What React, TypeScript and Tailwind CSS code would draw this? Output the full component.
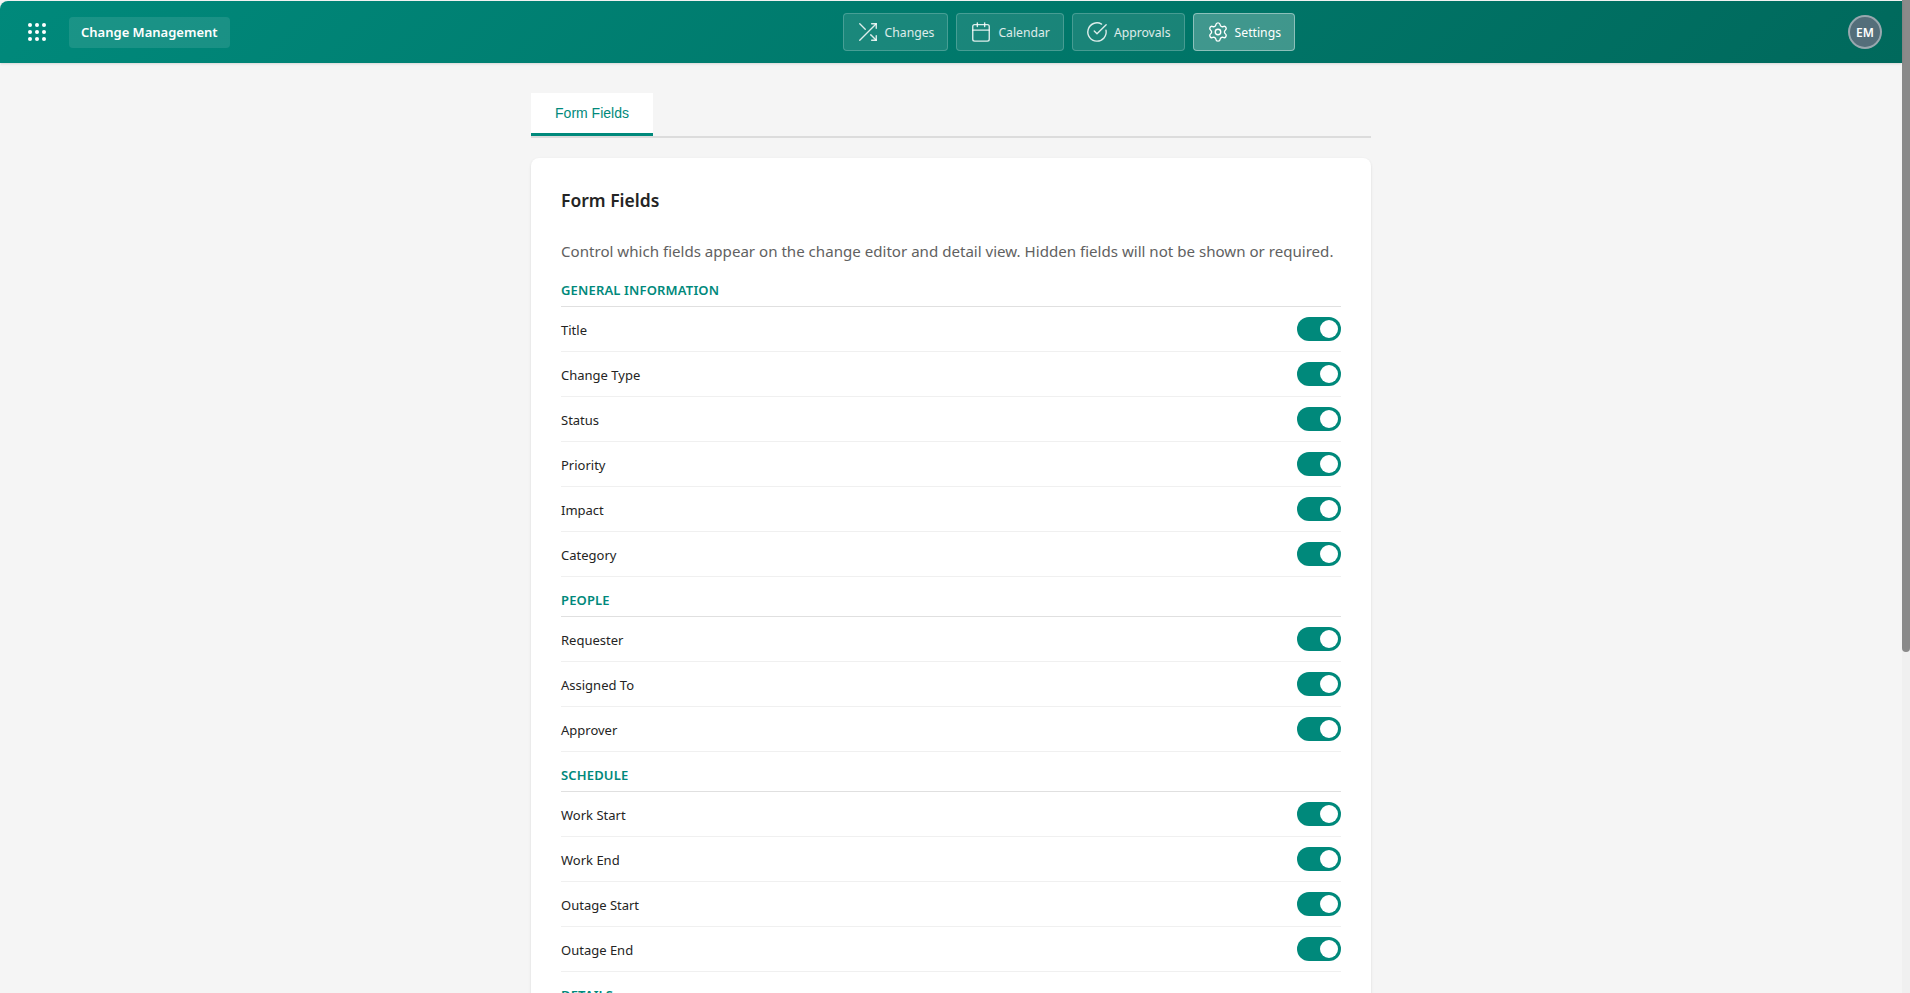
import { Calendar, CircleCheckBig, Settings } from "lucide-react";

const sections = [
  { name: "General Information", fields: ["Title", "Change Type", "Status", "Priority", "Impact", "Category"] },
  { name: "People", fields: ["Requester", "Assigned To", "Approver"] },
  { name: "Schedule", fields: ["Work Start", "Work End", "Outage Start", "Outage End"] },
  { name: "Details", fields: ["Description"] },
];

// straight crossing arrows, lucide's shuffle is curved
function ChangesIcon({ size, strokeWidth }: { size: number; strokeWidth: number }) {
  return (
    <svg width={size} height={size} viewBox="0 0 24 24" fill="none" stroke="currentColor" strokeWidth={strokeWidth} strokeLinecap="round" strokeLinejoin="round">
      <polyline points="16 3 21 3 21 8" />
      <line x1="3" y1="21" x2="21" y2="3" />
      <polyline points="21 16 21 21 16 21" />
      <line x1="15" y1="15" x2="21" y2="21" />
      <line x1="3" y1="3" x2="9" y2="9" />
    </svg>
  );
}

const nav = [
  { label: "Changes", icon: ChangesIcon, size: 22 },
  { label: "Calendar", icon: Calendar, size: 22 },
  { label: "Approvals", icon: CircleCheckBig, size: 22 },
  { label: "Settings", icon: Settings, size: 22, active: true },
];

function Toggle() {
  return (
    <div className="w-11 h-6 rounded-full bg-[#00897b] flex items-center justify-end pr-[3px]">
      <div className="w-[18px] h-[18px] rounded-full bg-white" />
    </div>
  );
}

function Dots() {
  return (
    <svg width="18" height="18" viewBox="0 0 18 18" fill="#fff">
      {[2, 9, 16].map((y) =>
        [2, 9, 16].map((x) => <circle key={`${x}-${y}`} cx={x} cy={y} r="2" />)
      )}
    </svg>
  );
}

export default function App() {
  return (
    <div className="h-[993px] w-full overflow-hidden flex bg-[#f5f5f5] font-['Noto_Sans','Open_Sans',sans-serif]">
      <div className="flex-1 min-w-0 flex flex-col pt-px">
        {/* HEADER */}
        <header className="relative h-[62px] shrink-0 rounded-tl-lg pl-7 pr-5 flex items-center bg-[linear-gradient(135deg,#00897b,#00695c)] text-white shadow-sm">
          <div className="flex items-center gap-[23px]">
            <Dots />
            <div className="h-[31px] px-3 rounded bg-white/10 flex items-center text-[13px] font-semibold">
              <span className="pt-px">Change Management</span>
            </div>
          </div>

          <nav className="ml-[613px] flex items-center gap-2">
            {nav.map((n) => (
              <button
                key={n.label}
                className={
                  n.active
                    ? "h-[38px] px-[13px] flex items-center gap-1.5 rounded border border-white/40 bg-white/25 text-[12.2px]"
                    : "h-[38px] px-[13px] flex items-center gap-1.5 rounded border border-white/20 bg-white/10 text-[12.2px] text-white/85"
                }
              >
                <n.icon size={n.size} strokeWidth={1.5} />
                <span className="pt-0.5">{n.label}</span>
              </button>
            ))}
          </nav>

          <div className="ml-auto w-[34px] h-[34px] rounded-full border-2 border-white/40 bg-[#546e7a] flex items-center justify-center text-xs font-semibold">
            <span className="pt-0.5">EM</span>
          </div>
        </header>

        {/* CONTENT */}
        <main className="w-[840px] mx-auto pt-[30px]">
          <div className="border-b-2 border-[#dcdcdc] h-[45px]">
            <div className="w-[122px] h-[43px] bg-white border-b-[3px] border-[#00897b] flex items-center justify-center text-sm text-[#00897b] font-['Liberation_Sans',sans-serif]">
              Form Fields
            </div>
          </div>

          <div className="mt-5 bg-white rounded-lg shadow-sm px-[30px] pt-[29px]">
            <h2 className="text-[17.5px] font-semibold text-[#242424]">Form Fields</h2>
            <p className="mt-[27px] mb-[18px] text-[15.1px] text-[#616161]">
              Control which fields appear on the change editor and detail view. Hidden fields will not be shown or required.
            </p>

            {sections.map((s) => (
              <section key={s.name}>
                <div className="mt-[13.5px] pb-1.5 border-b border-[#e0e0e0] text-[13px] font-semibold uppercase tracking-[0.16px] text-[#00897b]">
                  {s.name}
                </div>
                {s.fields.map((f) => (
                  <div key={f} className="h-[45px] flex items-center justify-between border-b border-[#f0f0f0] text-[13px] text-[#242424]">
                    <span className="pt-0.5">{f}</span>
                    <Toggle />
                  </div>
                ))}
              </section>
            ))}
          </div>
        </main>
      </div>

      {/* SCROLLBAR */}
      <div className="w-2 shrink-0 bg-[#f0f0f0]">
        <div className="h-[652px] rounded-b bg-[#8a8a8a]" />
      </div>
    </div>
  );
}
